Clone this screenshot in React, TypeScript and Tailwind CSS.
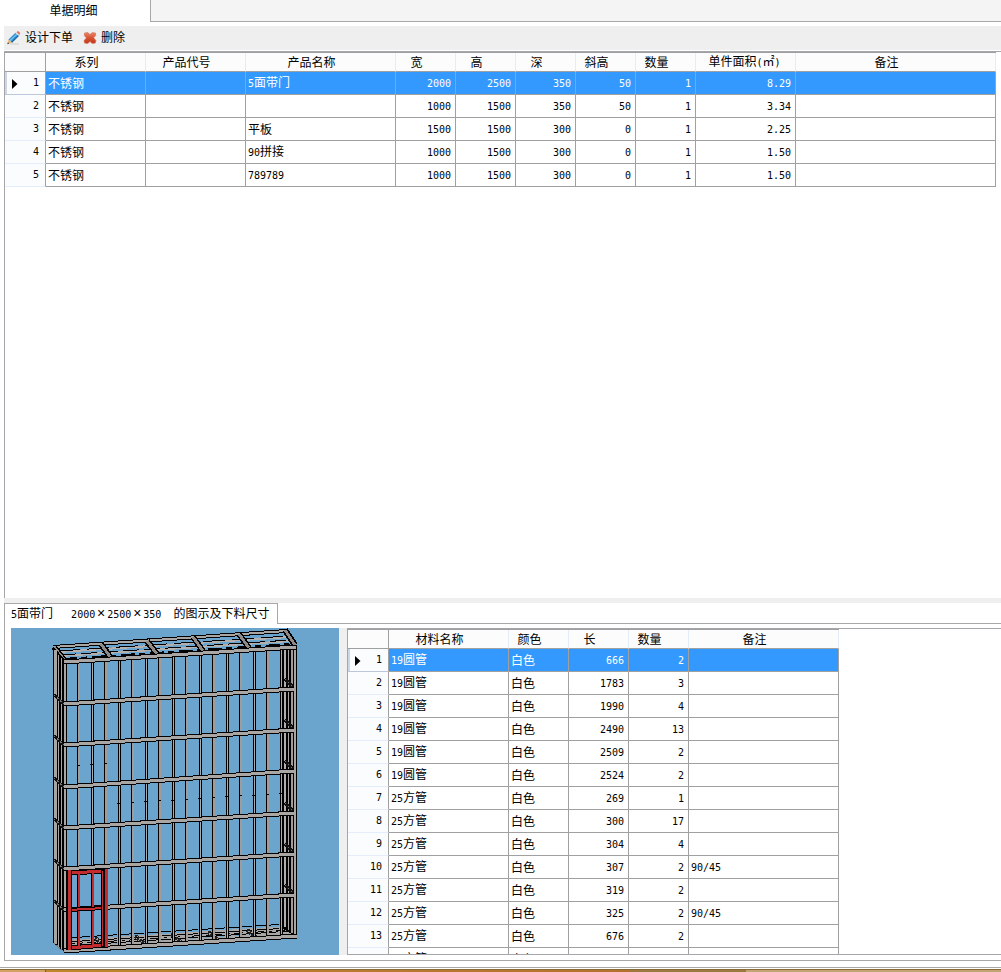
import React, { useState } from 'react';

interface Column {
  title: string;
  width: string;
  numeric?: boolean;
  wide?: boolean;
}

interface DataGridProps {
  label: string;
  columns: Column[];
  rows: string[][];
  tableWidth: string;
}

const productColumns: Column[] = [
  { title: '系列', width: 'w-[100px]' },
  { title: '产品代号', width: 'w-[100px]' },
  { title: '产品名称', width: 'w-[150px]' },
  { title: '宽', width: 'w-[60px]', numeric: true },
  { title: '高', width: 'w-[60px]', numeric: true },
  { title: '深', width: 'w-[60px]', numeric: true },
  { title: '斜高', width: 'w-[60px]', numeric: true },
  { title: '数量', width: 'w-[60px]', numeric: true },
  { title: '单件面积(㎡)', width: 'w-[100px]', numeric: true, wide: true },
  { title: '备注', width: 'w-[200px]' },
];

const products = [
  ['不锈钢', '', '5面带门', '2000', '2500', '350', '50', '1', '8.29', ''],
  ['不锈钢', '', '', '1000', '1500', '350', '50', '1', '3.34', ''],
  ['不锈钢', '', '平板', '1500', '1500', '300', '0', '1', '2.25', ''],
  ['不锈钢', '', '90拼接', '1000', '1500', '300', '0', '1', '1.50', ''],
  ['不锈钢', '', '789789', '1000', '1500', '300', '0', '1', '1.50', ''],
];

const materialColumns: Column[] = [
  { title: '材料名称', width: 'w-[120px]' },
  { title: '颜色', width: 'w-[60px]' },
  { title: '长', width: 'w-[60px]', numeric: true },
  { title: '数量', width: 'w-[60px]', numeric: true },
  { title: '备注', width: 'w-[150px]' },
];

const materials = [
  ['19圆管', '白色', '666', '2', ''],
  ['19圆管', '白色', '1783', '3', ''],
  ['19圆管', '白色', '1990', '4', ''],
  ['19圆管', '白色', '2490', '13', ''],
  ['19圆管', '白色', '2509', '2', ''],
  ['19圆管', '白色', '2524', '2', ''],
  ['25方管', '白色', '269', '1', ''],
  ['25方管', '白色', '300', '17', ''],
  ['25方管', '白色', '304', '4', ''],
  ['25方管', '白色', '307', '2', '90/45'],
  ['25方管', '白色', '319', '2', ''],
  ['25方管', '白色', '325', '2', '90/45'],
  ['25方管', '白色', '676', '2', ''],
  ['25方管', '白色', '', '', ''],
];

// Latin characters take half the width of a Chinese one
const Label: React.FC<{ text: string }> = ({ text }) => (
  <>
    {text.split(/([\x20-\x7e]+|×)/).filter(Boolean).map((part, i) => {
      if (part === '×') {
        return <span key={i} className="inline-block w-3 text-center text-[14px] leading-[12px]">×</span>;
      }
      return /^[\x20-\x7e]/.test(part)
        ? <span key={i} className="font-['DejaVu_Sans_Mono',monospace] text-[10px] whitespace-pre">{part}</span>
        : <React.Fragment key={i}>{part}</React.Fragment>;
    })}
  </>
);

const DataGrid: React.FC<DataGridProps> = ({ label, columns, rows, tableWidth }) => {
  const [selected, setSelected] = useState(0);

  return (
    <table aria-label={label} className={`${tableWidth} table-fixed border-separate border-spacing-0 border-t border-[#a0a0a0]`}>
      <colgroup>
        <col className="w-[41px]" />
        {columns.map((c, i) => <col key={i} className={c.width} />)}
      </colgroup>
      <thead>
        <tr className="h-[19px] bg-[#fcfcfc]">
          <th className="border-r border-b border-[#a0a0a0] p-0" />
          {columns.map((c, i) => (
            <th key={i} className={`border-r border-b border-r-[#e3edf9] border-b-[#a0a0a0] p-0 pt-px text-center font-normal whitespace-nowrap ${c.wide ? 'pr-[2px]' : 'pr-[18px]'}`}>
              <Label text={c.title} />
            </th>
          ))}
        </tr>
      </thead>
      <tbody>
        {rows.map((row, r) => {
          const active = r === selected;
          return (
            <tr key={r} onClick={() => setSelected(r)} className={`h-[23px] ${active ? 'bg-[#3399ff] text-white' : 'bg-white'}`}>
              <th className={`border-r border-b border-r-[#a0a0a0] bg-[#fbfcfd] p-0 font-normal text-black ${active ? 'border-b-[#bcc7dc]' : 'border-b-[#e3edfb]'}`}>
                <div className={`flex h-[22px] items-center justify-end pr-[6px] ${active ? 'border-l-2 border-[#cdd6e8]' : ''}`}>
                  {active && (
                    <svg className="mt-[2px] mr-auto ml-[5px]" width="6" height="10" viewBox="0 0 6 10">
                      <path d="M0 0l5.5 5L0 10z" fill="#000" />
                    </svg>
                  )}
                  <Label text={String(r + 1)} />
                </div>
              </th>
              {row.map((cell, i) => (
                <td key={i} className={`border-r border-b border-[#a0a0a0] p-0 whitespace-nowrap ${columns[i].numeric ? 'pr-1 text-right' : 'pt-px pl-[2px]'}`}>
                  <Label text={cell} />
                </td>
              ))}
            </tr>
          );
        })}
      </tbody>
    </table>
  );
};

const PencilIcon = () => (
  <svg width="16" height="16" viewBox="0 0 16 16">
    <path d="M4 14h9" stroke="#d2d2d2" strokeWidth="1.2" />
    <path d="M2.500 9.500L9.500 2.700l3.500 3L6 12.700z" fill="#2f8fd0" />
    <path d="M3.500 10.300L10.700 3.500l.9.8-7.200 7z" fill="#7cc4ee" />
    <path d="M5.200 12L12.500 5.100l.5.600L6 12.700z" fill="#1b6296" />
    <path d="M10.200 2.200L11.200 1.400c.5-.4 1.100-.3 1.600.1l1 1c.5.5.5 1.100.1 1.500l-.8 1.200z" fill="#e87468" />
    <path d="M9.300 2.900l.9-.8 3.200 3-.8.700z" fill="#d8e3ea" />
    <path d="M2.500 9.500l3.500 3.200L1.500 14z" fill="#e9b878" />
    <path d="M1.900 12.300l1.300 1.200-1.900.7z" fill="#333" />
  </svg>
);

const DeleteIcon = () => (
  <svg width="14" height="14" viewBox="0 0 14 14">
    <defs>
      <linearGradient id="del" x1="0" y1="0" x2="0" y2="1">
        <stop offset="0" stopColor="#e98a6c" />
        <stop offset="0.5" stopColor="#d9502f" />
        <stop offset="1" stopColor="#c03a20" />
      </linearGradient>
    </defs>
    <path d="M1.500 2L5 1.600 7 3.600 9.200 1.600 12.500 2 12.700 4.600 10.600 6.800 12.900 9.500 12.400 12 9.300 12.500 7 10.600 4.700 12.500 1.500 12 1.100 9.500 3.400 6.900 1.300 4.600z" fill="url(#del)" stroke="#d0694d" strokeWidth="0.600" strokeLinejoin="round" />
  </svg>
);

const bars = [79, 92, 106, 119, 133, 146, 160, 173, 187, 200, 214, 227, 241, 254, 268, 281];
const rails = [[704, 689], [745, 730], [787, 771], [828, 813], [869, 854], [910, 895]];
const ribs = [[54, 647, 65, 661], [101, 644, 111, 658], [147, 641, 157, 654], [193, 637, 203, 651], [239, 634, 249, 648]];

// y of a sloped line at x, given its ends at x = 65 and x = 294
const slope = (x: number, left: number, right: number) => left + ((x - 65) * (right - left)) / 229;

const Tube: React.FC<{ x1: number; y1: number; x2: number; y2: number; outer?: number; inner?: number; color?: string }> = ({
  x1, y1, x2, y2, outer = 5, inner = 3, color = '#aaa6a3'
}) => (
  <>
    <line x1={x1} y1={y1} x2={x2} y2={y2} stroke="#000" strokeWidth={outer} />
    <line x1={x1} y1={y1} x2={x2} y2={y2} stroke={color} strokeWidth={inner} />
  </>
);

const CabinetDrawing = () => (
  <svg className="block h-[327px] w-[328px] shrink-0 bg-[#6ba4cd]" viewBox="11 628 328 327" shapeRendering="crispEdges" role="img" aria-label="5面带门">
    {/* floor */}
    <path d="M66 940L287 926L292 934L66 949z" fill="#a9a7a5" />
    <path d="M66 938L287 924M66 942L289 928M66 946L291 931" stroke="#000" strokeDasharray="24 3" />
    <path d="M66 944L290 930" stroke="#000" strokeDasharray="9 5 3 4" />
    <path d="M70 947L292 932" stroke="#6ba4cd" strokeDasharray="4 11" />
    {[95, 135, 171, 208, 247].map((x, i) => (
      <path key={x} d={`M${x} ${938 - i * 2}l10 8`} stroke="#222" strokeWidth="4" strokeDasharray="2 1" />
    ))}

    {/* roof */}
    <Tube x1={53} y1={647} x2={286} y2={631} outer={4} inner={2} />
    <path d="M58 652L289 637M60 656L291 641" stroke="#b3b0ad" strokeWidth="2" />
    <path d="M58 651L289 636" stroke="#000" strokeDasharray="22 7" />
    <path d="M60 655L291 640" stroke="#000" strokeDasharray="16 5" />
    <path d="M63 659L292 644" stroke="#000" strokeWidth="2" strokeDasharray="14 4 6 5" />
    {ribs.map(([x1, y1, x2, y2]) => (
      <Tube key={x1} x1={x1} y1={y1} x2={x2} y2={y2} outer={6} inner={3} color="#8e8a88" />
    ))}

    {/* left side */}
    <path d="M53 646L66 661V953L53 943z" fill="#000" />
    <path d="M55.500 650V944" stroke="#a9a5a2" strokeWidth="3" />
    <path d="M58.500 655V947M61.500 658V949" stroke="#a9a5a2" />
    <path d="M65 662V951" stroke="#a9a5a2" strokeWidth="2" />
    <path d="M54 943L64 952" stroke="#777" strokeDasharray="2 1" />
    <path d="M66.500 661V953" stroke="#000" />

    {/* right side */}
    <path d="M283 645H297V937L283 929z" fill="#000" />
    <path d="M285 649V927" stroke="#b0adaa" strokeWidth="2" />
    <path d="M288.500 649V930" stroke="#aaa6a3" />
    <path d="M292 649V933" stroke="#a39b97" strokeWidth="2" />
    <path d="M295 649V936" stroke="#a9a5a2" strokeWidth="2" />
    <Tube x1={285} y1={630} x2={295} y2={645} outer={6} inner={3} color="#8e8a88" />

    {/* front bars */}
    {bars.map((x, i) => {
      const top = slope(x, 662, 648);
      const bottom = slope(x, 951, 936);
      return i % 2 === 0 ? (
        <g key={x}>
          <line x1={x - 1.5} x2={x - 1.5} y1={top} y2={bottom} stroke="#000" />
          <line x1={x} x2={x} y1={top} y2={bottom} stroke="#a39b97" strokeWidth="2" />
        </g>
      ) : (
        <g key={x}>
          <line x1={x + 0.5} x2={x + 0.5} y1={top} y2={bottom} stroke="#000" strokeWidth="3" />
          <line x1={x + 0.5} x2={x + 0.5} y1={top} y2={bottom} stroke="#aaa" />
        </g>
      );
    })}

    {/* side brackets and rails */}
    {rails.map(([left, right]) => (
      <g key={left}>
        <path d={`M54 ${left - 9}l10 9M285 ${right - 10}l8 8`} stroke="#111" strokeWidth="3" />
        <path d={`M54 ${left - 9}l10 9M285 ${right - 10}l8 8`} stroke="#777" strokeDasharray="2 2" />
        <Tube x1={64} y1={left} x2={294} y2={right} />
      </g>
    ))}
    <Tube x1={64} y1={662} x2={296} y2={647} />
    <Tube x1={64} y1={951} x2={297} y2={936} />
    {bars.map((x, i) => (
      <path key={x} d={`M${x - 2} ${i < 3 ? 765 - i : Math.round(803 - (x - 119) / 16)}h3`} stroke="#000" />
    ))}

    {/* door */}
    <g fill="none" stroke="#c22c2e">
      <path d="M68 873L106 871M68 948L106 945" stroke="#000" strokeWidth="5" />
      <path d="M68 873L106 871M68 948L106 945" strokeWidth="3" />
      <path d="M79 873V947M92.500 872V946" strokeWidth="2" />
      <path d="M68 910L104 908" stroke="#000" strokeWidth="4" />
      <path d="M68 910L104 908" strokeWidth="2" />
      <path d="M69 870V950M104 869V948" stroke="#000" strokeWidth="6" />
      <path d="M106 869V948" stroke="#000" strokeWidth="4" />
      <path d="M69.500 870V950M106 869V947" strokeWidth="3" />
      <path d="M102.500 871V946" />
    </g>
  </svg>
);

export default function App() {
  return (
    <div className="flex h-screen flex-col overflow-hidden bg-white font-['Liberation_Sans','Noto_Sans_CJK_SC',sans-serif] text-[12px] leading-[16px] text-black">
      <div role="tablist" className="flex h-[22px] shrink-0">
        <button role="tab" aria-selected="true" className="w-[150px] pr-[3px] text-center">单据明细</button>
        <div className="flex-1 border-b border-l border-[#a8a8a8] bg-[#f4f4f4]" />
      </div>

      <div className="mt-1 ml-1 flex h-6 shrink-0 items-center bg-[#efefef] pl-[2px]">
        <button className="flex items-center gap-[3px]"><PencilIcon />设计下单</button>
        <button className="ml-[10px] flex items-center gap-[4px]"><DeleteIcon />删除</button>
      </div>

      <div className="mt-px ml-1 min-h-0 flex-1 overflow-hidden border-t border-l border-[#a5a6aa]">
        <DataGrid label="单据明细" columns={productColumns} rows={products} tableWidth="w-[991px]" />
      </div>

      <div className="ml-1 h-[5px] shrink-0 bg-[#efefef]" />

      <div className="ml-1 flex h-[358px] shrink-0 flex-col border-b border-l border-[#a8a8a8]">
        <div role="tablist" className="flex h-[21px] shrink-0">
          <button role="tab" aria-selected="true" className="w-[273px] border-t border-r border-[#a8a8a8] pl-[6px] text-left whitespace-pre">
            <Label text="5面带门   2000×2500×350  的图示及下料尺寸" />
          </button>
          <div className="flex-1 border-b border-[#a8a8a8]" />
        </div>
        <div className="mt-1 ml-[6px] flex h-[327px] shrink-0">
          <CabinetDrawing />
          <div className="w-2 shrink-0 bg-[#efefef]" />
          <div className="min-w-0 flex-1 overflow-hidden border-y border-l border-[#a5a6aa]">
            <DataGrid label="下料尺寸" columns={materialColumns} rows={materials} tableWidth="w-[491px]" />
          </div>
        </div>
      </div>

      <div className="mt-[6px] h-px shrink-0 bg-[#a8a8a8]" />
      <div className="mt-px flex h-[3px] shrink-0 border-t border-[#8a6a35]">
        <div className="w-[46px] border-r border-[#7d5a28] bg-[#d0a263]" />
        <div className="flex-1 bg-linear-to-r from-[#bf872e] to-[#b5712c]" />
        <div className="w-[117px] bg-[#9c7a3e]" />
        <div className="w-[255px] bg-[#c2a572]" />
      </div>
    </div>
  );
}
